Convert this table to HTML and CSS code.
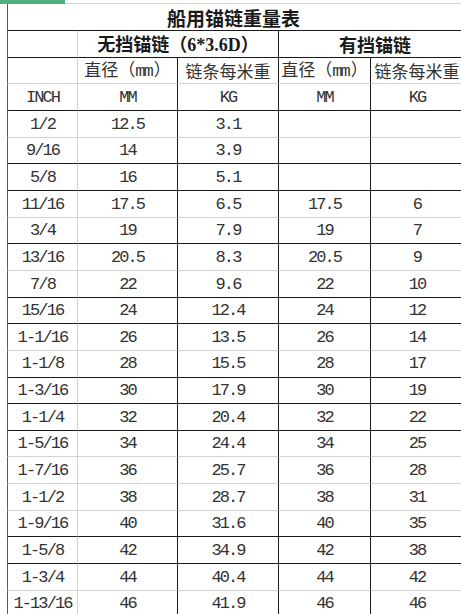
FILE: index.html
```html
<!DOCTYPE html>
<html lang="zh">
<head>
<meta charset="utf-8">
<title>船用锚链重量表</title>
<link rel="stylesheet" href="styles.css">
</head>
<body>
<div class="tab"></div>
<table class="sheet">
<colgroup><col class="c1"><col class="c2"><col class="c3"><col class="c4"><col class="c5"></colgroup>
<tr class="dk"><td colspan="5" class="title">船用锚链重量表</td></tr>
<tr class="dk"><td class="g"></td><td colspan="2" class="grp">无挡锚链（<span class="lat">6*3.6D</span>）</td><td colspan="2" class="grp grp2">有挡锚链</td></tr>
<tr class="lt"><td class="g"></td><td class="cj">直径（<span class="m">mm</span>）</td><td class="cj">链条每米重</td><td class="cj">直径（<span class="m">mm</span>）</td><td class="cj">链条每米重</td></tr>
<tr class="dk"><td class="g">INCH</td><td>MM</td><td>KG</td><td>MM</td><td>KG</td></tr>
<tr class="lt"><td class="g">1/2</td><td>12.5</td><td>3.1</td><td></td><td></td></tr>
<tr class="dk"><td class="g">9/16</td><td>14</td><td>3.9</td><td></td><td></td></tr>
<tr class="dk"><td class="g">5/8</td><td>16</td><td>5.1</td><td></td><td></td></tr>
<tr class="lt"><td class="g">11/16</td><td>17.5</td><td>6.5</td><td>17.5</td><td>6</td></tr>
<tr class="dk"><td class="g">3/4</td><td>19</td><td>7.9</td><td>19</td><td>7</td></tr>
<tr class="lt"><td class="g">13/16</td><td>20.5</td><td>8.3</td><td>20.5</td><td>9</td></tr>
<tr class="dk"><td class="g">7/8</td><td>22</td><td>9.6</td><td>22</td><td>10</td></tr>
<tr class="dk"><td class="g">15/16</td><td>24</td><td>12.4</td><td>24</td><td>12</td></tr>
<tr class="lt"><td class="g">1-1/16</td><td>26</td><td>13.5</td><td>26</td><td>14</td></tr>
<tr class="dk"><td class="g">1-1/8</td><td>28</td><td>15.5</td><td>28</td><td>17</td></tr>
<tr class="dk"><td class="g">1-3/16</td><td>30</td><td>17.9</td><td>30</td><td>19</td></tr>
<tr class="dk"><td class="g">1-1/4</td><td>32</td><td>20.4</td><td>32</td><td>22</td></tr>
<tr class="lt"><td class="g">1-5/16</td><td>34</td><td>24.4</td><td>34</td><td>25</td></tr>
<tr class="lt"><td class="g">1-7/16</td><td>36</td><td>25.7</td><td>36</td><td>28</td></tr>
<tr class="lt"><td class="g">1-1/2</td><td>38</td><td>28.7</td><td>38</td><td>31</td></tr>
<tr class="dk"><td class="g">1-9/16</td><td>40</td><td>31.6</td><td>40</td><td>35</td></tr>
<tr class="dk"><td class="g">1-5/8</td><td>42</td><td>34.9</td><td>42</td><td>38</td></tr>
<tr class="lt"><td class="g">1-3/4</td><td>44</td><td>40.4</td><td>44</td><td>42</td></tr>
<tr class="lt"><td class="g">1-13/16</td><td>46</td><td>41.9</td><td>46</td><td>46</td></tr>
</table>
</body>
</html>
```
FILE: styles.css
```css
html, body {
  margin: 0;
  padding: 0;
  background: #fff;
  overflow: hidden;
}
body {
  width: 461px;
  height: 614px;
  position: relative;
}
.tab {
  position: absolute;
  left: 0;
  top: 0;
  width: 65px;
  height: 4px;
  background: #4fb07c;
}
.sheet {
  border-collapse: separate;
  border-spacing: 0;
  table-layout: fixed;
  width: 457px;
  margin: 3.33px 0 0 7px;
  border-top: 1px solid #d6d6d6;
  font-family: "Liberation Mono", "Noto Sans CJK SC", monospace;
  color: #333;
}
.c1 { width: 71px; }
.c2 { width: 100px; }
.c3 { width: 101px; }
.c4 { width: 92px; }
.c5 { width: 93px; }
.sheet tr { height: 26.67px; }
.sheet td {
  padding: 2px 0 0 0;
  border-right: 1px solid #1a1a1a;
  border-bottom: 1px solid #1a1a1a;
  text-align: center;
  vertical-align: middle;
  font-size: 17px;
  letter-spacing: -1.9px;
  line-height: 1.2;
  white-space: nowrap;
}
.sheet tr.lt td { border-bottom-color: #d2d2d2; }
.sheet td:first-child { border-left: 1px solid #5a5a5a; }
.sheet td.g { border-right-color: #d2d2d2; }
.sheet td.title {
  font-family: "Noto Sans CJK SC", sans-serif;
  font-weight: bold;
  font-size: 19px;
  letter-spacing: 0;
  line-height: 1.2;
  padding: 2px 4px 0 0;
  color: #1a1a1a;
}
.sheet td.grp {
  font-family: "Noto Sans CJK SC", sans-serif;
  font-weight: bold;
  font-size: 18px;
  letter-spacing: 0;
  padding-top: 1px;
  color: #1a1a1a;
}
.sheet td.grp2 { padding-left: 8px; }
.lat {
  font-family: "Liberation Serif", serif;
  font-weight: bold;
}
.sheet td.cj {
  font-family: "Noto Sans CJK SC", sans-serif;
  font-size: 17px;
  letter-spacing: 0;
  padding-top: 1px;
}
.m {
  font-family: "Liberation Mono", monospace;
  letter-spacing: -1.9px;
  margin-right: 1.9px;
}
```
